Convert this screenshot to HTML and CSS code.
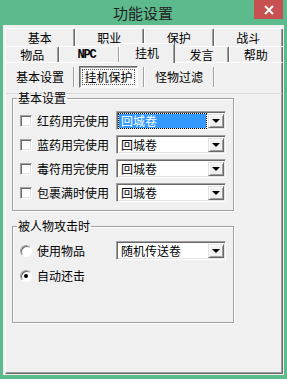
FILE: index.html
```html
<!DOCTYPE html>
<html>
<head>
<meta charset="utf-8">
<link rel="stylesheet" href="styles.css">
</head>
<body>
<div class="window">
  <div class="titlebar">功能设置</div>
  <div class="close"><svg width="10" height="10" viewBox="0 0 10 10"><path d="M1 1L9 9M9 1L1 9" stroke="#fff" stroke-width="2"/></svg></div>
  <div class="client">
    <div class="tabrow row1">
      <div class="tab">基本</div>
      <div class="tab">职业</div>
      <div class="tab">保护</div>
      <div class="tab">战斗</div>
    </div>
    <div class="tabrow row2">
      <div class="tab">物品</div>
      <div class="tab npc">NPC</div>
      <div class="tab active">挂机</div>
      <div class="tab">发言</div>
      <div class="tab">帮助</div>
    </div>
    <div class="panel">
      <div class="subtabs">
        <div class="subtab t1">基本设置</div>
        <div class="sep"></div>
        <div class="subtab t2 pressed"><span class="focus">挂机保护</span></div>
        <div class="sep s2"></div>
        <div class="subtab t3">怪物过滤</div>
        <div class="sep s3"></div>
      </div>
      <div class="hline"></div>
      <fieldset class="group g1">
        <legend>基本设置</legend>
        <div class="row">
          <span class="check"></span><span class="label">红药用完使用</span>
          <div class="combo"><span class="value selected">回城卷</span><span class="arrow"></span></div>
        </div>
        <div class="row">
          <span class="check"></span><span class="label">蓝药用完使用</span>
          <div class="combo"><span class="value">回城卷</span><span class="arrow"></span></div>
        </div>
        <div class="row">
          <span class="check"></span><span class="label">毒符用完使用</span>
          <div class="combo"><span class="value">回城卷</span><span class="arrow"></span></div>
        </div>
        <div class="row">
          <span class="check"></span><span class="label">包裹满时使用</span>
          <div class="combo"><span class="value">回城卷</span><span class="arrow"></span></div>
        </div>
      </fieldset>
      <fieldset class="group g2">
        <legend>被人物攻击时</legend>
        <div class="row">
          <span class="radio"></span><span class="label">使用物品</span>
          <div class="combo"><span class="value">随机传送卷</span><span class="arrow"></span></div>
        </div>
        <div class="row r2">
          <span class="radio on"></span><span class="label">自动还击</span>
        </div>
      </fieldset>
    </div>
  </div>
</div>
</body>
</html>
```
FILE: styles.css
```css
* { box-sizing: border-box; }
body {
  margin: 0;
  background: #5dba8d;
  font-family: "Noto Sans CJK SC", "Noto Sans", sans-serif;
  font-size: 12px;
  line-height: 14px;
  color: #000;
}
.window {
  width: 287px;
  height: 379px;
  position: relative;
  display: flex;
  flex-direction: column;
}
.titlebar {
  height: 25px;
  display: flex;
  align-items: center;
  justify-content: center;
  font-size: 15px;
  color: #222;
  padding-right: 1px;
}
.close {
  position: absolute;
  top: 0;
  left: 254px;
  width: 29px;
  height: 19px;
  background: #c75050;
  display: flex;
  align-items: center;
  justify-content: center;
}
.client {
  margin: 0 3px;
  height: 350px;
  background: #f0f0f0;
  padding: 3px 1px 1px 2px;
  display: flex;
  flex-direction: column;
}
.tabrow { display: flex; }
.tab {
  flex: 1;
  display: flex;
  align-items: center;
  justify-content: center;
  background: #f0f0f0;
  border-top: 1px solid #fff;
  border-left: 1px solid #fff;
  border-right: 1px solid #696969;
  box-shadow: inset -1px 0 0 #a0a0a0;
  border-radius: 2px 2px 0 0;
}
.row1 { height: 18px; }
.row1 .tab { padding-top: 1px; }
.row2 { height: 16px; }
.row2 .tab { padding-top: 1px; }
.npc {
  font-family: "Liberation Mono", monospace;
  font-size: 12px;
  font-weight: bold;
  letter-spacing: -1.2px;
  padding-right: 6px;
}
.tab.active {
  position: relative;
  z-index: 2;
  height: 20px;
  margin: -3px -1px -1px -1px;
  padding-bottom: 3px;
  flex: 1.04;
}
.panel {
  flex: 1;
  border-top: 1px solid #fff;
  border-left: 1px solid #fff;
  border-right: 1px solid #696969;
  border-bottom: 1px solid #696969;
  box-shadow: inset -1px -1px 0 #a0a0a0;
  display: flex;
  flex-direction: column;
  align-items: flex-start;
}
.subtabs {
  display: flex;
  align-items: center;
  height: 22px;
  margin-top: 3px;
}
.subtab {
  height: 22px;
  width: 60px;
  display: flex;
  align-items: center;
  justify-content: center;
}
.t1 { margin-left: 4px; }
.t2 { margin-left: 4px; width: 59px; }
.t3 { margin-left: 4px; }
.pressed {
  border-top: 1px solid #696969;
  border-left: 1px solid #696969;
  border-right: 1px solid #fff;
  border-bottom: 1px solid #fff;
  box-shadow: inset 1px 1px 0 #a0a0a0;
  background: #f8f8f8;
  padding: 2px;
}
.focus {
  flex: 1;
  align-self: stretch;
  display: flex;
  align-items: center;
  justify-content: center;
  border: 1px dotted #555;
}
.sep {
  width: 2px;
  height: 20px;
  margin-left: 3px;
  border-left: 1px solid #a0a0a0;
  border-right: 1px solid #fff;
}
.s2 { margin-left: 5px; }
.s3 { margin-left: 4px; }
.hline {
  align-self: stretch;
  height: 1px;
  margin-top: 5px;
  background: #dadada;
}
.group {
  margin: 0 0 0 6px;
  width: 222px;
  padding: 6px 7px 8px 0;
  border: 1px solid #a0a0a0;
  box-shadow: 1px 1px 0 #fff, inset 1px 1px 0 #fff;
  display: flex;
  flex-direction: column;
  gap: 5px;
}
.g1 { margin-top: -3px; }
.g2 { margin-top: 8px; padding-top: 8px; padding-bottom: 37px; gap: 6px; }
legend {
  margin-left: 4px;
  padding: 0 1px;
  line-height: 14px;
}
.row {
  display: flex;
  align-items: center;
  height: 19px;
}
.check {
  width: 12px;
  height: 12px;
  margin-left: 7px;
  background: #fff;
  border-top: 1px solid #a0a0a0;
  border-left: 1px solid #a0a0a0;
  border-right: 1px solid #fff;
  border-bottom: 1px solid #fff;
  box-shadow: inset 1px 1px 0 #696969, inset -1px -1px 0 #e3e3e3;
}
.radio {
  width: 12px;
  height: 12px;
  margin-left: 7px;
  border-radius: 50%;
  background: #fff;
  border: 1px solid;
  border-color: #a0a0a0 #fff #fff #a0a0a0;
  box-shadow: inset 1px 1px 0 #696969;
  display: flex;
  align-items: center;
  justify-content: center;
}
.radio.on::after {
  content: "";
  width: 4px;
  height: 4px;
  border-radius: 50%;
  background: #000;
}
.label { margin-left: 5px; }
.combo {
  margin-left: auto;
  width: 110px;
  height: 19px;
  background: #fff;
  border-top: 1px solid #a0a0a0;
  border-left: 1px solid #a0a0a0;
  border-right: 1px solid #fff;
  border-bottom: 1px solid #fff;
  box-shadow: inset 1px 1px 0 #696969, inset -1px -1px 0 #e3e3e3;
  display: flex;
  padding: 2px 1px 1px 2px;
}
.value {
  flex: 1;
  display: flex;
  align-items: center;
  padding-left: 2px;
  margin-right: 2px;
}
.value.selected {
  background: #3399ff;
  color: #fff;
  outline: 1px dotted #000;
  outline-offset: 0;
}
.arrow {
  width: 16px;
  background: #f0f0f0;
  border-top: 1px solid #e3e3e3;
  border-left: 1px solid #e3e3e3;
  border-right: 1px solid #696969;
  border-bottom: 1px solid #696969;
  box-shadow: inset 1px 1px 0 #fff, inset -1px -1px 0 #a0a0a0;
  display: flex;
  align-items: center;
  justify-content: center;
}
.arrow::after {
  content: "";
  border-left: 4px solid transparent;
  border-right: 4px solid transparent;
  border-top: 4px solid #000;
}
```
